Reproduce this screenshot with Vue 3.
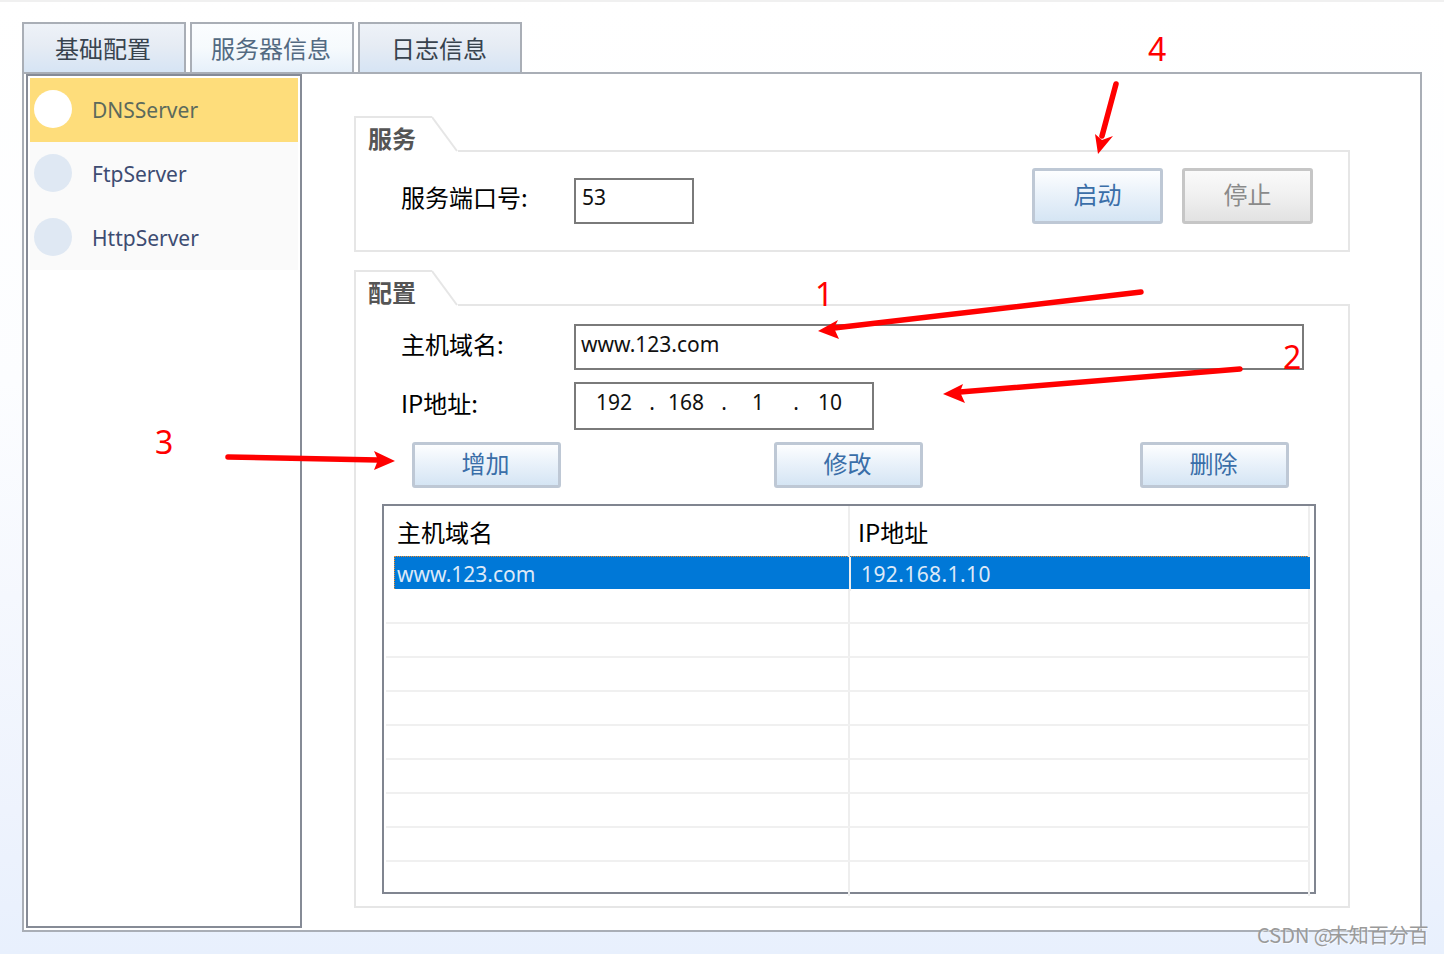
<script setup>
const tabs = [
  { label: '基础配置', cls: 'tab-a' },
  { label: '服务器信息', cls: 'tab-b' },
  { label: '日志信息', cls: 'tab-a' }
]
const servers = [
  { name: 'DNSServer', active: true },
  { name: 'FtpServer', active: false },
  { name: 'HttpServer', active: false }
]
const blankRows = 9
const ipParts = ['192', '168', '1', '10']
const arrows = [
  { d: 'M1141 292 L834 328', head: '818,331 838,320 834,328 839,339' },
  { d: 'M1240 369 L960 392', head: '943,394 963,384 960,392 965,403' },
  { d: 'M228 457 L378 460', head: '395,461 374,451 378,460 374,470' },
  { d: 'M1116 84 L1102 136', head: '1098,154 1095,134 1102,140 1113,136' }
]
const marks = [
  { n: '1', cls: 'm1' },
  { n: '2', cls: 'm2' },
  { n: '3', cls: 'm3' },
  { n: '4', cls: 'm4' }
]
</script>

<template>
  <div class="page">
    <div class="topstrip"></div>
    <div class="tabs">
      <div v-for="t in tabs" :key="t.label" class="tab" :class="t.cls">{{ t.label }}</div>
    </div>
    <div class="panel">
      <aside class="side">
        <div v-for="s in servers" :key="s.name" class="item" :class="{ active: s.active }">
          <span class="dot"></span>
          <span class="item-name">{{ s.name }}</span>
        </div>
      </aside>
      <main class="main">
        <section class="group">
          <div class="g-head">
            <div class="g-title">服务</div>
            <svg class="g-diag" width="26" height="36" viewBox="0 0 26 36"><path d="M0 1 L25 35" stroke="#e6e6e6" stroke-width="2" fill="none" /></svg>
            <div class="g-line"></div>
          </div>
          <div class="g-body svc">
            <span class="label svc-label">服务端口号:</span>
            <div class="input port">53</div>
            <div class="svc-btns">
              <button class="btn start">启动</button>
              <button class="btn off stop">停止</button>
            </div>
          </div>
        </section>
        <section class="group cfg">
          <div class="g-head">
            <div class="g-title">配置</div>
            <svg class="g-diag" width="26" height="36" viewBox="0 0 26 36"><path d="M0 1 L25 35" stroke="#e6e6e6" stroke-width="2" fill="none" /></svg>
            <div class="g-line"></div>
          </div>
          <div class="g-body conf">
            <div class="form-row">
              <span class="label l1">主机域名:</span>
              <div class="input domain">www.123.com</div>
            </div>
            <div class="form-row r2">
              <span class="label l2">IP地址:</span>
              <div class="input ip">
                <template v-for="(p, i) in ipParts" :key="i">
                  <span class="ip-part">{{ p }}</span>
                  <span v-if="i < 3" class="ip-dot">.</span>
                </template>
              </div>
            </div>
            <div class="actions">
              <button class="btn wide">增加</button>
              <button class="btn wide">修改</button>
              <button class="btn wide last">删除</button>
            </div>
            <div class="table">
              <div class="row head">
                <div class="cell c1">主机域名</div>
                <div class="cell c2">IP地址</div>
              </div>
              <div class="row selected">
                <div class="cell c1">www.123.com</div>
                <div class="cell c2">192.168.1.10</div>
              </div>
              <div v-for="n in blankRows" :key="n" class="row blank">
                <div class="cell c1"></div>
                <div class="cell c2"></div>
              </div>
            </div>
          </div>
        </section>
      </main>
    </div>

    <svg class="arrows" width="1444" height="954" viewBox="0 0 1444 954">
      <g v-for="(a, i) in arrows" :key="i">
        <path :d="a.d" stroke="#ff0000" stroke-width="5.5" stroke-linecap="round" fill="none" />
        <polygon :points="a.head" fill="#ff0000" />
      </g>
    </svg>
    <span v-for="m in marks" :key="m.n" class="mark" :class="m.cls">{{ m.n }}</span>
    <span class="watermark">CSDN <span class="at">@</span>未知百分百</span>
  </div>
</template>

<style>
html, body { margin: 0; padding: 0; }
</style>

<style scoped>
.page {
  position: relative;
  width: 1444px;
  height: 954px;
  overflow: hidden;
  box-sizing: border-box;
  padding: 22px 22px 0;
  background: linear-gradient(180deg, #ffffff 0%, #fcfdff 40%, #eef3fd 85%, #e8f0fd 100%);
  font-family: "Noto Sans CJK SC", "Noto Sans", sans-serif;
}
.topstrip { position: absolute; left: 0; top: 0; width: 100%; height: 2px; background: #f0f0f0; }
.tabs { display: flex; gap: 4px; height: 50px; }
.tab {
  width: 164px;
  box-sizing: border-box;
  border: 2px solid #a9aeb6;
  border-bottom: 0;
  padding-right: 2px;
  font-size: 24px;
  line-height: 47px;
  text-align: center;
}
.tab-a { background: linear-gradient(180deg, #eef2f8 0%, #e6ecf4 45%, #d6e4f4 100%); color: #38434e; }
.tab-b { background: linear-gradient(180deg, #fbfdff 0%, #f6fafd 50%, #e6f0fa 100%); color: #536a82; }
.panel {
  display: flex;
  width: 1400px;
  height: 860px;
  box-sizing: border-box;
  border: 2px solid #a9aeb6;
  background: #fff;
}
.side {
  width: 276px;
  height: 854px;
  margin-left: 2px;
  box-sizing: border-box;
  border: 2px solid #868b96;
  padding: 2px;
  background: #fff;
}
.item {
  display: flex;
  align-items: center;
  height: 64px;
  padding-left: 4px;
  background: #fafafa;
}
.item.active { background: #fedd7b; }
.dot { width: 38px; height: 38px; margin-top: -2px; border-radius: 50%; background: #dfe8f3; flex: none; }
.active .dot { background: #fff; }
.item-name {
  margin-left: 20px;
  font-family: "Noto Sans", sans-serif;
  font-size: 21px;
  color: #3d4c72;
}
.active .item-name { color: #5c6a5c; }
.main { width: 996px; margin-left: 52px; padding-top: 42px; }
.group.cfg { margin-top: 18px; }
.g-head { display: flex; height: 36px; }
.g-title {
  width: 78px;
  box-sizing: border-box;
  border: 2px solid #e6e6e6;
  border-width: 2px 0 0 2px;
  padding-left: 12px;
  font-size: 24px;
  font-weight: 700;
  line-height: 40px;
  color: #555;
  background: #fff;
}
.g-diag { flex: none; }
.g-line { flex: 1; border-bottom: 2px solid #e6e6e6; }
.g-body {
  box-sizing: border-box;
  border: 2px solid #e6e6e6;
  border-top: 0;
  background: #fff;
}
.svc {
  display: flex;
  height: 100px;
  padding: 16px 35px 0 45px;
  align-items: flex-start;
}
.label { color: #000; font-size: 24px; line-height: 46px; }
.svc-label { width: 173px; flex: none; margin-top: 6px; }
.input {
  box-sizing: border-box;
  border: 2px solid #7a7a7a;
  background: #fff;
  font-family: "Noto Sans", sans-serif;
  font-size: 21px;
  color: #111;
  padding-left: 6px;
}
.port { width: 120px; height: 46px; line-height: 35px; margin-top: 10px; }
.svc-btns { display: flex; gap: 19px; margin-left: auto; }
.btn {
  box-sizing: border-box;
  width: 131px;
  height: 56px;
  padding: 0 0 5px;
  border: 3px solid #bec8d5;
  border-radius: 3px;
  background: linear-gradient(180deg, #fdfeff 0%, #eaf2fa 45%, #d5e5f4 100%);
  color: #3a6ea8;
  font-family: "Noto Sans CJK SC", sans-serif;
  font-size: 24px;
}
.btn.off {
  border-color: #c6c6c6;
  background: linear-gradient(180deg, #fafafa 0%, #f0f0f0 50%, #e2e2e2 100%);
  color: #8a8a8a;
}
.conf { height: 602px; padding: 18px 32px 0 46px; }
.form-row { display: flex; align-items: flex-start; }
.form-row .label { width: 172px; flex: none; }
.form-row .l1 { margin-top: -3px; margin-left: -1px; margin-right: 1px; }
.form-row .l2 { margin-top: -2px; margin-left: -1px; margin-right: 1px; }
.r2 { margin-top: 12px; }
.domain { width: 730px; height: 46px; line-height: 36px; padding-left: 5px; }
.ip {
  width: 300px;
  height: 48px;
  line-height: 36px;
  padding-left: 20px;
  display: flex;
}
.ip-part { width: 36px; text-align: center; }
.ip-dot { width: 36px; box-sizing: border-box; padding-left: 4px; text-align: center; }
.actions { display: flex; gap: 213px; width: 877px; margin: 12px 0 0 10px; }
.btn.wide { width: 149px; height: 46px; padding: 0 2px 7px 0; }
.btn.wide.last { margin-left: auto; }
.table {
  box-sizing: border-box;
  width: 934px;
  height: 390px;
  margin: 16px 0 0 -20px;
  border: 2px solid #808590;
  padding: 0 4px 0 2px;
  background: #fff;
}
.row { display: grid; grid-template-columns: 464px 1fr; }
.cell { box-sizing: border-box; }
.c1 { border-right: 2px solid #eeeeee; }
.c2 { border-right: 2px solid #eeeeee; }
.head { height: 50px; }
.head .cell { color: #000; font-size: 24px; line-height: 51px; }
.head .c1 { padding-left: 11px; }
.head .c2 { padding-left: 8px; }
.selected {
  height: 33px;
  margin-left: 8px;
  grid-template-columns: 456px 1fr;
  border-top: 1px dotted #f08a24;
  border-left: 1px dotted #f08a24;
  background: #0078d7;
  box-sizing: border-box;
}
.selected .cell {
  color: #dce9f8;
  font-family: "Noto Sans", sans-serif;
  font-size: 21px;
  line-height: 34px;
  border-right: 0;
}
.selected .c1 { padding-left: 2px; border-right: 2px solid #eeeeee; }
.selected .c2 { padding-left: 10px; letter-spacing: 0.4px; }
.blank { height: 34px; box-sizing: border-box; border-bottom: 2px solid #f0f0f0; }
.selected + .blank { height: 35px; }
.blank:last-child { border-bottom: 0; }
.arrows { position: absolute; left: 0; top: 0; pointer-events: none; }
.mark {
  position: absolute;
  font-family: "Noto Sans", sans-serif;
  font-size: 32px;
  line-height: 40px;
  color: #ff0000;
}
.m1 { left: 815px; top: 274px; }
.m2 { left: 1283px; top: 337px; }
.m3 { left: 155px; top: 422px; }
.m4 { left: 1148px; top: 29px; }
.watermark {
  position: absolute;
  left: 1257px;
  top: 922px;
  font-size: 20px;
  line-height: 26px;
  color: #9a9a9a;
  text-shadow: 1px 1px 0 rgba(255, 255, 255, 0.6);
  white-space: nowrap;
}
.at { letter-spacing: -4px; }
</style>
